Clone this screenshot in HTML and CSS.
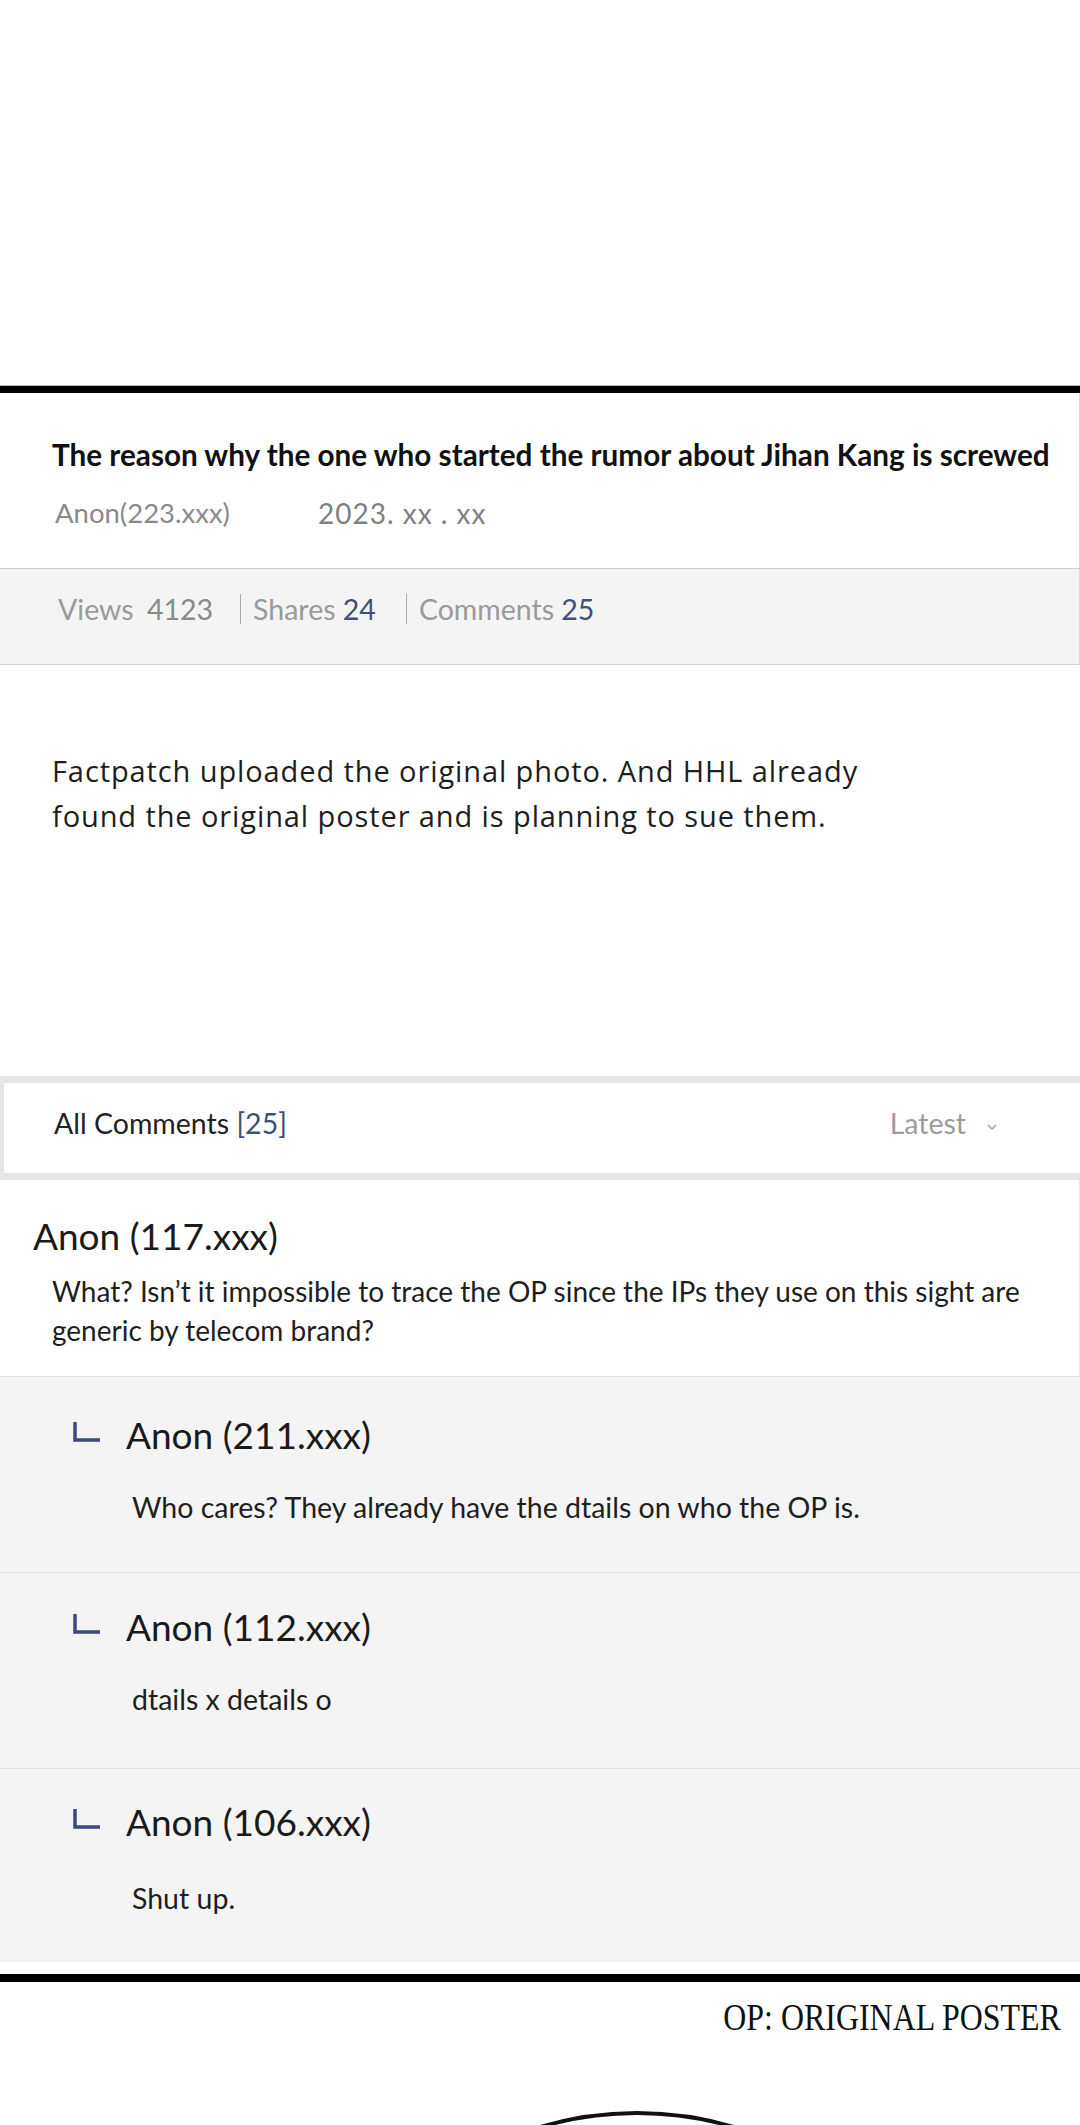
FILE: index.html
```html
<!DOCTYPE html>
<html lang="en">
<head>
<meta charset="utf-8">
<title>The reason why the one who started the rumor about Jihan Kang is screwed</title>
<link rel="stylesheet" href="styles.css">
</head>
<body>
<div class="page">
  <div class="top-space"></div>
  <div class="rule rule-top"></div>

  <section class="post-head">
    <h1 class="post-title">The reason why the one who started the rumor about Jihan Kang is screwed</h1>
    <div class="post-meta">
      <span class="meta-author">Anon(223.xxx)</span>
      <span class="meta-date">2023. xx . xx</span>
    </div>
  </section>

  <div class="stats">
    <span class="stat">Views <span class="stat-num">4123</span></span>
    <span class="stat">Shares <span class="stat-num accent">24</span></span>
    <span class="stat">Comments <span class="stat-num accent">25</span></span>
  </div>

  <div class="post-body">
    <p>Factpatch uploaded the original photo. And HHL already<br>found the original poster and is planning to sue them.</p>
  </div>

  <section class="comments">
    <div class="comments-head">
      <span class="comments-title">All Comments <span class="accent">[25]</span></span>
      <span class="sort">Latest
        <svg class="chev" width="12" height="8" viewBox="0 0 12 8"><path d="M2 2 L6 6 L10 2" fill="none" stroke="#aaa" stroke-width="1.6"/></svg>
      </span>
    </div>

    <div class="comment">
      <div class="c-author">Anon (117.xxx)</div>
      <p class="c-text">What? Isn’t it impossible to trace the OP since the IPs they use on this sight are generic by telecom brand?</p>
    </div>

    <div class="reply">
      <div class="r-head">
        <svg class="r-icon" width="30" height="22" viewBox="0 0 30 22"><path d="M3 1 V19 H28" fill="none" stroke="#3b4a7d" stroke-width="3.5"/></svg>
        <span class="r-author">Anon (211.xxx)</span>
      </div>
      <p class="r-text">Who cares? They already have the dtails on who the OP is.</p>
    </div>

    <div class="reply reply-2">
      <div class="r-head">
        <svg class="r-icon" width="30" height="22" viewBox="0 0 30 22"><path d="M3 1 V19 H28" fill="none" stroke="#3b4a7d" stroke-width="3.5"/></svg>
        <span class="r-author">Anon (112.xxx)</span>
      </div>
      <p class="r-text">dtails x details o</p>
    </div>

    <div class="reply reply-3">
      <div class="r-head">
        <svg class="r-icon" width="30" height="22" viewBox="0 0 30 22"><path d="M3 1 V19 H28" fill="none" stroke="#3b4a7d" stroke-width="3.5"/></svg>
        <span class="r-author">Anon (106.xxx)</span>
      </div>
      <p class="r-text">Shut up.</p>
    </div>
  </section>

  <div class="rule rule-bottom"></div>
  <div class="caption"><span class="caption-text">OP: ORIGINAL POSTER</span></div>
  <div class="art">
    <svg width="1080" height="87" viewBox="0 0 1080 87"><circle cx="637" cy="409" r="340" fill="none" stroke="#111" stroke-width="4"/></svg>
  </div>
</div>
</body>
</html>
```

FILE: styles.css
```css
html, body {
  margin: 0;
  padding: 0;
  background: #fff;
}

.page {
  width: 1080px;
  height: 2125px;
  overflow: hidden;
  font-family: "Open Sans", "Noto Sans", sans-serif;
  color: #222;
}

.top-space {
  height: 385px;
}

.rule {
  height: 8px;
  background: #000;
}

.rule-top {
  border-top: 1px solid #bbb;
  height: 7px;
}

/* post header */
.post-head {
  padding: 42px 0 37px 52px;
  border-right: 1px solid #ddd;
  border-bottom: 1px solid #cfcfcf;
}

.post-title {
  margin: 0;
  font-family: "Lato", "Open Sans", sans-serif;
  font-weight: 700;
  font-size: 29.7px;
  line-height: 40px;
  color: #111;
  white-space: nowrap;
}

.post-meta {
  margin-top: 20px;
  display: flex;
  align-items: center;
  line-height: 36px;
  padding-left: 3px;
}

.meta-author {
  font-family: "Lato", sans-serif;
  font-size: 27.5px;
  color: #8a8a8a;
  width: 263px;
}

.meta-date {
  font-family: "Lato", sans-serif;
  font-size: 28px;
  letter-spacing: 1px;
  color: #808080;
}

/* stats */
.stats {
  display: flex;
  align-items: center;
  padding: 22px 0 37px 58px;
  background: #f4f4f4;
  border-right: 1px solid #ddd;
  border-bottom: 1px solid #cfcfcf;
  font-family: "Lato", sans-serif;
  font-size: 28.5px;
  line-height: 36px;
  color: #9a9a9a;
}

.stat + .stat {
  margin-left: 27px;
  padding-left: 12px;
  border-left: 1px solid #aaa;
  line-height: 30px;
}

.stat:last-child {
  margin-left: 30px;
}

.stat-num {
  margin-left: 6px;
  color: #8a8a8a;
}

.stat-num.accent {
  margin-left: 0;
}

.accent {
  color: #3d4f7a;
}

/* body */
.post-body {
  padding: 83px 20px 238px 52px;
}

.post-body p {
  margin: 0;
  font-size: 29px;
  letter-spacing: 0.9px;
  line-height: 45px;
  color: #1e1e1e;
}

/* comments */
.comments-head {
  display: flex;
  justify-content: space-between;
  align-items: center;
  border-top: 7px solid #e6e6e6;
  border-bottom: 7px solid #e6e6e6;
  border-left: 4px solid #e6e6e6;
  padding: 22px 82px 32px 50px;
  font-family: "Lato", sans-serif;
  font-size: 28.5px;
  line-height: 36px;
}

.comments-title {
  color: #222;
}

.sort {
  color: #9c9c9c;
  display: flex;
  align-items: center;
}

.chev {
  margin-left: 20px;
  margin-top: 8px;
}

.comment {
  padding: 34px 20px 26px 0;
  border-right: 1px solid #e6e6e6;
  border-bottom: 1px solid #e2e2e2;
}

.c-author {
  padding-left: 33px;
  font-family: "Lato", sans-serif;
  font-size: 37px;
  line-height: 44px;
  color: #1a1a1a;
}

.c-text {
  margin: 14px 0 0 52px;
  font-family: "Lato", sans-serif;
  font-size: 28px;
  line-height: 39px;
  color: #1e1e1e;
}

.reply {
  background: #f4f4f4;
  border-bottom: 1px solid #e2e2e2;
  padding: 36px 0 47px 0;
}

.reply-2 {
  padding-top: 32px;
  padding-bottom: 51px;
}

.reply-3 {
  border-bottom: none;
  padding-top: 31px;
  padding-bottom: 46px;
}

.reply-3 .r-text {
  margin-top: 36px;
}

.r-head {
  display: flex;
  align-items: center;
  padding-left: 72px;
  height: 44px;
}

.r-icon {
  margin-top: -6px;
  margin-right: 24px;
}

.r-author {
  font-family: "Lato", sans-serif;
  font-size: 37px;
  line-height: 44px;
  color: #1a1a1a;
}

.r-text {
  margin: 32px 0 0 132px;
  font-family: "Lato", sans-serif;
  font-size: 28.5px;
  line-height: 36px;
  color: #1e1e1e;
}

/* bottom */
.rule-bottom {
  margin-top: 12px;
}

.caption {
  margin-top: 15px;
  padding-right: 19px;
  text-align: right;
  line-height: 40px;
}

.caption-text {
  display: inline-block;
  font-family: "Liberation Serif", "DejaVu Serif", serif;
  font-size: 38px;
  color: #111;
  transform: scaleX(0.84);
  transform-origin: right center;
}

.art svg {
  display: block;
}
```
